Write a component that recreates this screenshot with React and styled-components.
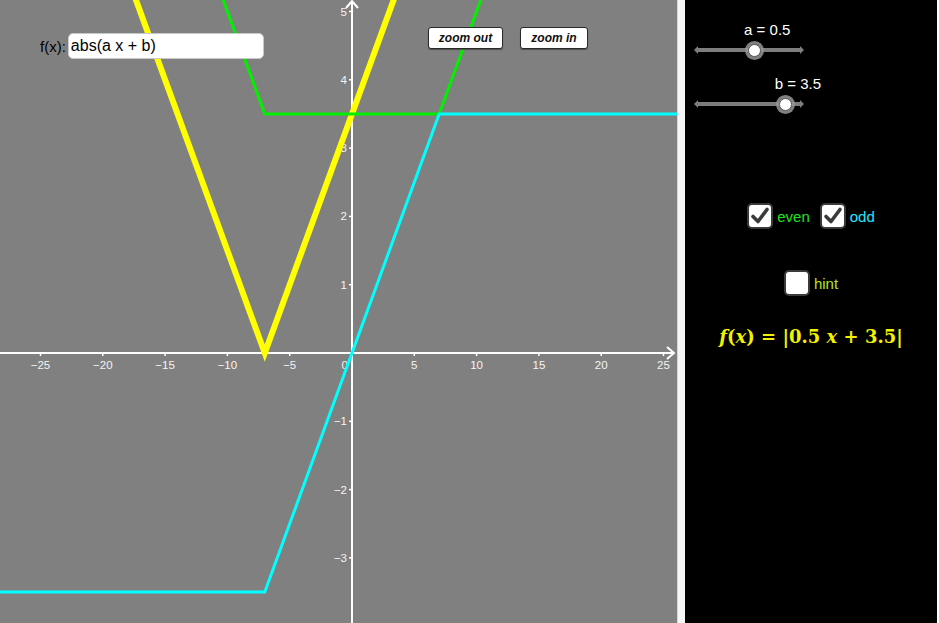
import React from "react";
import styled, { createGlobalStyle } from "styled-components";

const Global = createGlobalStyle`
  html, body { margin: 0; padding: 0; background: #ffffff; }
  body { font-family: "Liberation Sans", Arial, sans-serif; }
`;

const Frame = styled.div`
  display: flex;
  flex-direction: row;
  width: 937px;
  height: 623px;
  overflow: hidden;
`;

const GraphArea = styled.div`
  position: relative;
  width: 677px;
  height: 623px;
  flex: none;
  background: #808080;
  overflow: hidden;
`;

const Canvas = styled.svg`
  display: block;
`;

const InputBar = styled.div`
  position: absolute;
  left: 40px;
  top: 33px;
  display: flex;
  align-items: center;
  gap: 2px;
`;

const InputLabel = styled.span`
  font-size: 15px;
  color: #000;
`;

const TextField = styled.div`
  width: 192px;
  height: 24px;
  background: #fff;
  border: 1px solid #c8c8c8;
  border-radius: 5px;
  font-size: 16px;
  color: #000;
  display: flex;
  align-items: center;
  padding-left: 2px;
`;

const ButtonBar = styled.div`
  position: absolute;
  left: 428px;
  top: 27px;
  display: flex;
  gap: 17px;
`;

const ZoomButton = styled.div`
  width: ${(p) => p.$w}px;
  height: 22px;
  box-sizing: border-box;
  background: #fff;
  border: 1px solid #2a2a2a;
  border-radius: 3px;
  box-shadow: 0 1px 1px rgba(0, 0, 0, 0.4);
  font-size: 12px;
  font-weight: bold;
  font-style: italic;
  color: #111;
  display: flex;
  align-items: center;
  justify-content: center;
`;

const Divider = styled.div`
  width: 8px;
  flex: none;
  background: #f6f6f6;
  border-left: 1px solid #d6d6d6;
  box-sizing: border-box;
`;

const Panel = styled.div`
  width: 252px;
  flex: none;
  background: #000;
  display: flex;
  flex-direction: column;
`;

const SliderBlock = styled.div`
  position: relative;
  margin-left: 11px;
  width: 106px;
  height: ${(p) => p.$h}px;
`;

const SliderLabel = styled.div`
  position: absolute;
  top: ${(p) => p.$top}px;
  font-size: 15px;
  color: #fff;
  white-space: nowrap;
`;

const Track = styled.div`
  position: absolute;
  left: 2px;
  right: 2px;
  top: ${(p) => p.$top}px;
  height: 4px;
  background: #7d7d7d;
  &::before, &::after {
    content: "";
    position: absolute;
    top: -2px;
    border-top: 4px solid transparent;
    border-bottom: 4px solid transparent;
  }
  &::before { left: -4px; border-right: 4px solid #7d7d7d; }
  &::after { right: -4px; border-left: 4px solid #7d7d7d; }
`;

const Thumb = styled.div`
  position: absolute;
  top: 50%;
  width: 11px;
  height: 11px;
  margin-left: -6px;
  margin-top: -6px;
  border-radius: 50%;
  background: #fff;
  border: 1px solid #555;
  box-shadow: 0 0 0 3px rgba(150, 150, 150, 0.85);
`;

const CheckRow = styled.div`
  display: flex;
  justify-content: center;
  align-items: center;
  gap: 10px;
  margin-top: ${(p) => p.$mt}px;
  height: 26px;
`;

const CheckItem = styled.div`
  display: flex;
  align-items: center;
  gap: 4px;
`;

const Box = styled.div`
  width: 22px;
  height: 22px;
  border: 2px solid #3a3a3a;
  border-radius: 5px;
  background: #fff;
  display: flex;
  align-items: center;
  justify-content: center;
`;

const CheckLabel = styled.span`
  font-size: 15px;
  color: ${(p) => p.$color};
`;

const Formula = styled.div`
  margin-top: 30px;
  text-align: center;
  font-family: "DejaVu Serif", "Liberation Serif", serif;
  font-weight: bold;
  font-size: 18px;
  color: #f2f200;
  white-space: nowrap;
`;

const Var = styled.i`
  font-style: italic;
`;

const X0 = 352;
const Y0 = 353;
const SX = 12.46;
const SY = 68.3;
const px = (x) => X0 + x * SX;
const py = (y) => Y0 - y * SY;
const pts = (arr) => arr.map(([x, y]) => `${px(x).toFixed(1)},${py(y).toFixed(1)}`).join(" ");

const xTicks = [-25, -20, -15, -10, -5, 5, 10, 15, 20, 25];
const yTicks = [-3, -2, -1, 1, 2, 3, 4, 5];
const fmt = (n) => (n < 0 ? "\u2212" + Math.abs(n) : String(n));

function Graph() {
  return (
    <Canvas width="677" height="623" viewBox="0 0 677 623">
      <g stroke="#fff" strokeWidth="2" fill="none">
        <line x1="0" y1={Y0} x2="674" y2={Y0} />
        <polyline points={`667,${Y0 - 6} 674,${Y0} 667,${Y0 + 6}`} strokeWidth="2" />
        <line x1={X0} y1="623" x2={X0} y2="1" />
        <polyline points={`${X0 - 6},8 ${X0},1 ${X0 + 6},8`} strokeWidth="2" />
        {xTicks.map((t) => (
          <line key={t} x1={px(t)} y1={Y0} x2={px(t)} y2={Y0 + 3} strokeWidth="1.5" />
        ))}
        {yTicks.map((t) => (
          <line key={t} x1={X0 - 3} y1={py(t)} x2={X0} y2={py(t)} strokeWidth="1.5" />
        ))}
      </g>
      <g fill="#f4f4f4" fontFamily="Liberation Sans, Arial, sans-serif" fontSize="11.5">
        {xTicks.map((t) => (
          <text key={t} x={px(t)} y={Y0 + 16} textAnchor="middle">{fmt(t)}</text>
        ))}
        <text x={X0 - 4} y={Y0 + 16} textAnchor="end">0</text>
        {yTicks.map((t) => (
          <text key={t} x={X0 - 5} y={py(t) + 4} textAnchor="end">{fmt(t)}</text>
        ))}
      </g>
      <polyline points={pts([[-20, 6.5], [-7, 0], [6, 6.5]])} stroke="#ffff00" strokeWidth="6" fill="none" strokeLinejoin="miter" />
      <polyline points={pts([[-14, 7], [-7, 3.5], [7, 3.5], [14, 7]])} stroke="#00f000" strokeWidth="3" fill="none" />
      <polyline points={pts([[-30, -3.5], [-7, -3.5], [7, 3.5], [30, 3.5]])} stroke="#00ffff" strokeWidth="3" fill="none" />
    </Canvas>
  );
}

function Slider({ name, value, min, max, labelTop, trackTop, height }) {
  const width = 102;
  const pos = 2 + ((value - min) / (max - min)) * width;
  return (
    <SliderBlock $h={height}>
      <SliderLabel $top={labelTop} style={{ left: pos - 10 }}>
        {name} = {value}
      </SliderLabel>
      <Track $top={trackTop}>
        <Thumb style={{ left: pos - 2 }} />
      </Track>
    </SliderBlock>
  );
}

function Check({ checked }) {
  return (
    <Box>
      {checked && (
        <svg width="20" height="20" viewBox="0 0 20 20">
          <path d="M3 10.5 L8 15.5 L17 3.5" stroke="#3a3a3a" strokeWidth="3.6" fill="none" strokeLinecap="round" strokeLinejoin="round" />
        </svg>
      )}
    </Box>
  );
}

export default function App() {
  return (
    <>
      <Global />
      <Frame>
        <GraphArea>
          <Graph />
          <InputBar>
            <InputLabel>f(x):</InputLabel>
            <TextField>abs(a x + b)</TextField>
          </InputBar>
          <ButtonBar>
            <ZoomButton $w={75}>zoom out</ZoomButton>
            <ZoomButton $w={68}>zoom in</ZoomButton>
          </ButtonBar>
        </GraphArea>
        <Divider />
        <Panel>
          <Slider name="a" value={0.5} min={-5} max={5} labelTop={21} trackTop={48} height={54} />
          <Slider name="b" value={3.5} min={-5} max={5} labelTop={21} trackTop={48} height={60} />
          <CheckRow $mt={89}>
            <CheckItem>
              <Check checked />
              <CheckLabel $color="#1fe01f">even</CheckLabel>
            </CheckItem>
            <CheckItem>
              <Check checked />
              <CheckLabel $color="#22e6ff">odd</CheckLabel>
            </CheckItem>
          </CheckRow>
          <CheckRow $mt={41}>
            <CheckItem>
              <Check />
              <CheckLabel $color="#b4e61e">hint</CheckLabel>
            </CheckItem>
          </CheckRow>
          <Formula>
            <Var>f</Var>(<Var>x</Var>) = |0.5 <Var>x</Var> + 3.5|
          </Formula>
        </Panel>
      </Frame>
    </>
  );
}
